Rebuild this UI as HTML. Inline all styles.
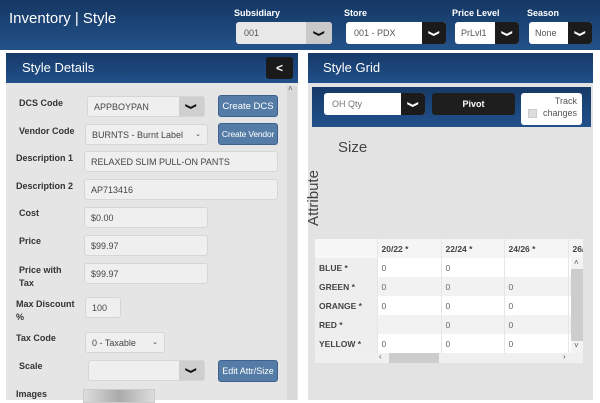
<!DOCTYPE html>
<html><head><style>
*{box-sizing:border-box;margin:0;padding:0}
body{width:600px;height:400px;overflow:hidden;background:#fff;font-family:"Liberation Sans",sans-serif;position:relative}
.a{position:absolute}
.hdr{left:0;top:0;width:600px;height:50px;background:linear-gradient(#153763,#23528a)}
.blue{background:linear-gradient(#163a68,#21508a)}
.lbl{font-size:9px;font-weight:bold;color:#333}
.in{background:#efefef;border:1px solid #d6d6d6;border-radius:3px;font-size:9px;color:#444;padding-left:6px;display:flex;align-items:center;white-space:nowrap}
.btn{background:#557ca6;border:1px solid #3d6290;border-radius:3px;color:#fff;font-size:9.5px;display:flex;align-items:center;justify-content:center;white-space:nowrap;overflow:hidden}
.dd{background:#cfcfcf;display:flex;align-items:center;justify-content:center;color:#111}
.chev{display:inline-block;transform:rotate(90deg) scaleY(1.3);font-size:8px;font-weight:bold}
.hsel{background:#fff;border-radius:3px;font-size:9px;color:#555;display:flex;align-items:center;padding-left:8px}
.hsel .k{position:absolute;right:0;top:0;bottom:0;background:#1b1b1b;color:#fff;display:flex;align-items:center;justify-content:center;border-radius:0 3px 3px 0}
.hl{font-size:9px;font-weight:bold;color:#fff}
td{font-size:8.5px;color:#666;height:19px;padding-left:4px;border-right:1px solid #e6e6e6}
</style></head><body>
<div class="a hdr"></div>
<div class="a" style="left:9px;top:10px;font-size:15px;color:#fff">Inventory | Style</div>
<div class="a hl" style="left:234px;top:8px">Subsidiary</div>
<div class="a hsel" style="left:236px;top:22px;width:96px;height:22px;background:#e8e8e8"><span>001</span><div class="k" style="width:26px;background:#c9c9c9;color:#111"><span class="chev">&#10095;</span></div></div>
<div class="a hl" style="left:344px;top:8px">Store</div>
<div class="a hsel" style="left:346px;top:22px;width:100px;height:22px">001 - PDX<div class="k" style="width:24px"><span class="chev">&#10095;</span></div></div>
<div class="a hl" style="left:452px;top:8px">Price Level</div>
<div class="a hsel" style="left:455px;top:22px;width:64px;height:22px;padding-left:6px">PrLvl1<div class="k" style="width:24px"><span class="chev">&#10095;</span></div></div>
<div class="a hl" style="left:527px;top:8px">Season</div>
<div class="a hsel" style="left:529px;top:22px;width:63px;height:22px;padding-left:6px">None<div class="k" style="width:24px"><span class="chev">&#10095;</span></div></div>

<div class="a blue" style="left:6px;top:53px;width:292px;height:30px"></div>
<div class="a" style="left:22px;top:60px;font-size:13px;color:#fff">Style Details</div>
<div class="a" style="left:266px;top:57px;width:27px;height:22px;background:#1a1a1a;border-radius:3px;color:#fff;font-size:12px;font-weight:bold;text-align:center;line-height:22px">&lt;</div>
<div class="a" style="left:6px;top:83px;width:292px;height:317px;background:#e5e5e5"></div>
<div class="a" style="left:287px;top:86px;width:10px;height:314px;background:#d9d9d9"></div>
<div class="a" style="left:288px;top:84px;font-size:8px;color:#666">&#708;</div>

<div class="a lbl" style="left:19px;top:98px">DCS Code</div>
<div class="a in" style="left:87px;top:96px;width:118px;height:21px">APPBOYPAN<div class="a dd" style="right:0;top:0;width:25px;height:19px"><span class="chev">&#10095;</span></div></div>
<div class="a btn" style="left:218px;top:95px;width:60px;height:22px">Create DCS</div>
<div class="a lbl" style="left:19px;top:126px">Vendor Code</div>
<div class="a in" style="left:85px;top:124px;width:123px;height:21px">BURNTS - Burnt Label<span class="a" style="right:6px;top:5px;font-size:7px">&#8964;</span></div>
<div class="a btn" style="left:218px;top:123px;width:60px;height:22px;font-size:8.5px;letter-spacing:-0.2px">Create Vendor</div>
<div class="a lbl" style="left:16px;top:153px">Description 1</div>
<div class="a in" style="left:84px;top:151px;width:194px;height:21px">RELAXED SLIM PULL-ON PANTS</div>
<div class="a lbl" style="left:16px;top:181px">Description 2</div>
<div class="a in" style="left:84px;top:179px;width:194px;height:21px">AP713416</div>
<div class="a lbl" style="left:19px;top:208px">Cost</div>
<div class="a in" style="left:84px;top:207px;width:124px;height:21px">$0.00</div>
<div class="a lbl" style="left:19px;top:236px">Price</div>
<div class="a in" style="left:84px;top:235px;width:124px;height:21px">$99.97</div>
<div class="a lbl" style="left:19px;top:264px;line-height:13px">Price with<br>Tax</div>
<div class="a in" style="left:84px;top:263px;width:124px;height:21px">$99.97</div>
<div class="a lbl" style="left:16px;top:298px;line-height:13px">Max Discount<br>%</div>
<div class="a in" style="left:85px;top:297px;width:36px;height:21px">100</div>
<div class="a lbl" style="left:16px;top:333px">Tax Code</div>
<div class="a in" style="left:85px;top:332px;width:80px;height:21px">0 - Taxable<span class="a" style="right:6px;top:5px;font-size:7px">&#8964;</span></div>
<div class="a lbl" style="left:19px;top:361px">Scale</div>
<div class="a in" style="left:88px;top:360px;width:117px;height:21px"><div class="a dd" style="right:0;top:0;width:25px;height:19px"><span class="chev">&#10095;</span></div></div>
<div class="a btn" style="left:218px;top:360px;width:60px;height:22px;font-size:9px">Edit Attr/Size</div>
<div class="a lbl" style="left:16px;top:389px">Images</div>
<div class="a" style="left:83px;top:389px;width:72px;height:14px;background:linear-gradient(90deg,#ddd,#aaa,#ddd);border:1px solid #ccc"></div>

<div class="a blue" style="left:308px;top:53px;width:285px;height:30px"></div>
<div class="a" style="left:323px;top:60px;font-size:13px;color:#fff">Style Grid</div>
<div class="a" style="left:308px;top:83px;width:285px;height:317px;background:#e3e3e3"></div>
<div class="a blue" style="left:312px;top:87px;width:279px;height:40px"></div>
<div class="a hsel" style="left:324px;top:93px;width:101px;height:22px;color:#777">OH Qty<div class="k" style="width:24px"><span class="chev">&#10095;</span></div></div>
<div class="a" style="left:432px;top:93px;width:83px;height:22px;background:#1e1e1e;border-radius:3px;color:#fff;font-size:9px;font-weight:bold;text-align:center;line-height:22px">Pivot</div>
<div class="a" style="left:521px;top:93px;width:61px;height:32px;background:#fff;border-radius:3px;font-size:9px;color:#555;text-align:right;padding-right:5px;line-height:12px;padding-top:2px">Track<br><span style="display:inline-block;width:9px;height:9px;background:#ddd;border:1px solid #ccc;vertical-align:middle;margin-right:6px"></span>changes</div>
<div class="a" style="left:338px;top:139px;font-size:15px;color:#444">Size</div>
<div class="a" style="left:284px;top:190px;width:60px;height:16px;font-size:15px;color:#444;transform:rotate(-90deg);text-align:center;line-height:16px">Attribute</div>

<div class="a" style="left:315px;top:239px;width:268px;height:124px;background:#fff;overflow:hidden">
<table style="border-collapse:collapse;width:290px;table-layout:fixed">
<colgroup><col style="width:62px"><col style="width:64px"><col style="width:63px"><col style="width:64px"><col style="width:37px"></colgroup>
<tr style="background:#f5f5f5;font-weight:bold"><td style="background:#f7f7f7"></td><td style="font-weight:bold;color:#444">20/22 *</td><td style="font-weight:bold;color:#444">22/24 *</td><td style="font-weight:bold;color:#444">24/26 *</td><td style="font-weight:bold;color:#444">26/</td></tr>
<tr><td style="background:#eee;font-weight:bold;color:#444">BLUE *</td><td>0</td><td>0</td><td></td><td></td></tr>
<tr style="background:#f2f2f2"><td style="background:#eee;font-weight:bold;color:#444">GREEN *</td><td>0</td><td>0</td><td>0</td><td></td></tr>
<tr><td style="background:#eee;font-weight:bold;color:#444">ORANGE *</td><td>0</td><td>0</td><td>0</td><td></td></tr>
<tr style="background:#f2f2f2"><td style="background:#eee;font-weight:bold;color:#444">RED *</td><td></td><td>0</td><td>0</td><td></td></tr>
<tr><td style="background:#eee;font-weight:bold;color:#444">YELLOW *</td><td>0</td><td>0</td><td>0</td><td></td></tr>
</table>
<div class="a" style="left:0;top:114px;width:268px;height:10px;background:#f0f0f0"></div>
<div class="a" style="left:74px;top:114px;width:50px;height:10px;background:#cdcdcd"></div>
<div class="a" style="left:64px;top:113px;font-size:8px;color:#555">&lsaquo;</div>
<div class="a" style="left:248px;top:113px;font-size:8px;color:#555">&rsaquo;</div>
<div class="a" style="left:256px;top:19px;width:12px;height:95px;background:#f3f3f3"></div>
<div class="a" style="left:256px;top:30px;width:12px;height:72px;background:#cdcdcd"></div>
<div class="a" style="left:259px;top:19px;font-size:8px;color:#555">&#708;</div>
<div class="a" style="left:259px;top:102px;font-size:8px;color:#555">&#709;</div>
</div>
</body></html>
